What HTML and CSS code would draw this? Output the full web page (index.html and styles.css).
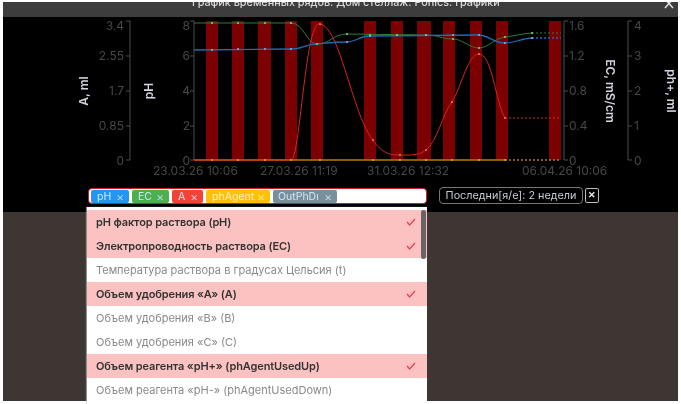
FILE: index.html
```html
<!DOCTYPE html>
<html lang="en">
<head>
    <meta charset="UTF-8">
    <title>Ponics charts</title>
    <link rel="stylesheet" href="styles.css">
</head>
<body>

<div class="window">
    <div class="titlebar">
        <span class="title">График временных рядов. Дом стеллаж: Ponics. графики</span>
        <svg class="close" width="12" height="8" viewBox="0 0 12 8"><path d="M1 -3 L9 6 M9 -3 L1 6"/></svg>
    </div>

    <div class="panel">
        <svg class="chart" width="675" height="171" viewBox="3 17 675 171">
            <g class="bars">
                <rect x="206" y="21" width="12" height="139"/>
                <rect x="232" y="21" width="12" height="139"/>
                <rect x="258" y="21" width="13" height="139"/>
                <rect x="285" y="21" width="12" height="139"/>
                <rect x="311" y="21" width="12" height="139"/>
                <rect x="364" y="21" width="12" height="139"/>
                <rect x="391" y="21" width="12" height="139"/>
                <rect x="417" y="21" width="14" height="139"/>
                <rect x="443" y="21" width="12" height="139"/>
                <rect x="470" y="21" width="12" height="139"/>
                <rect x="496" y="21" width="12" height="139"/>
                <rect x="549" y="21" width="12" height="139"/>
            </g>

            <!-- axes -->
            <g class="axis">
                <path d="M126 21 H130 V160 H126 M126 56 H130 M126 91 H130 M126 126 H130"/>
                <path d="M190 21 H194 V160 H190 M190 56 H194 M190 91 H194 M190 126 H194"/>
                <path d="M568 21 H564 V160 H568 M564 56 H568 M564 91 H568 M564 126 H568"/>
                <path d="M632 21 H628 V160 H632 M628 56 H632 M628 91 H632 M628 126 H632"/>
            </g>
            <g class="ticks end">
                <text x="124" y="30">3.4</text>
                <text x="124" y="60">2.55</text>
                <text x="124" y="95">1.7</text>
                <text x="124" y="130">0.85</text>
                <text x="124" y="165">0</text>
                <text x="190" y="30">8</text>
                <text x="190" y="60">6</text>
                <text x="190" y="95">4</text>
                <text x="190" y="130">2</text>
                <text x="190" y="165">0</text>
            </g>
            <g class="ticks">
                <text x="569" y="30">1.6</text>
                <text x="569" y="60">1.2</text>
                <text x="569" y="95">0.8</text>
                <text x="569" y="130">0.4</text>
                <text x="569" y="165">0</text>
                <text x="634" y="30">4</text>
                <text x="634" y="60">3</text>
                <text x="634" y="95">2</text>
                <text x="634" y="130">1</text>
                <text x="634" y="165">0</text>
                <text x="153" y="175">23.03.26 10:06</text>
                <text x="260" y="175">27.03.26 11:19</text>
                <text x="367" y="175">31.03.26 12:32</text>
                <text x="522" y="175">06.04.26 10:06</text>
            </g>
            <text class="axis-name" transform="translate(88 91) rotate(-90)">A, ml</text>
            <text class="axis-name" transform="translate(153 91) rotate(-90)">pH</text>
            <text class="axis-name" transform="translate(606 91) rotate(90)">EC, mS/cm</text>
            <text class="axis-name" transform="translate(667 91) rotate(90)">ph+, ml</text>

            <!-- series -->
            <path class="line yellow" d="M194 160 H505"/>
            <path class="line yellow dotted" d="M505 160 H561"/>
            <path class="line green" d="M194 23 L291 23 C304 23 306 44 317.5 44 C330 44 333 34 347 34 L426 35 C440 35 440 39 453 39 C462 39 470 48 479 48 C488 48 495 38 505 37 C515 36 522 33.5 532 33"/>
            <path class="line green dotted" d="M532 33 H561"/>
            <path class="line blue" d="M194 50 L291 49 C304 49 304 44 317.5 44 C328 43 335 42 347 42 C355 42 360 36 370 36 L478 35 C490 35 492 43 505 43 C515 43 522 38 532 38"/>
            <path class="line blue dotted" d="M532 38 H561"/>
            <path class="line red" d="M194 160 L291 160 C300 160 305 24 319 24 C335 24 345 75 360 115 C368 135 378 155 397 155 C410 155 418 156 426 150 C438 140 442 115 452 102 C462 85 468 54 479 54 C492 54 495 100 505 118"/>
            <path class="line red dotted" d="M505 118 H561"/>

            <g class="dots">
                <path class="dot-green" d="M212 23h.01 M238 23h.01 M265 23h.01 M291 23h.01 M317 44h.01 M347 34h.01 M370 35h.01 M397 35h.01 M426 35h.01 M453 39h.01 M479 48h.01 M505 37h.01 M532 33h.01"/>
                <path class="dot-blue" d="M212 50h.01 M238 49h.01 M265 49h.01 M291 49h.01 M347 42h.01 M370 36h.01 M397 35h.01 M426 35h.01 M453 35h.01 M479 35h.01 M505 43h.01 M532 38h.01"/>
                <path class="dot-red" d="M320 24h.01 M373 140h.01 M400 155h.01 M426 150h.01 M452 102h.01 M479 54h.01 M505 118h.01"/>
                <path class="dot-yellow" d="M212 160h.01 M238 160h.01 M265 160h.01 M291 160h.01 M320 160h.01 M373 160h.01 M400 160h.01 M426 160h.01 M452 160h.01 M479 160h.01 M505 160h.01"/>
            </g>
        </svg>

        <div class="controls">
            <div class="chip-input">
                <span class="chip chip-blue">pH <i>×</i></span>
                <span class="chip chip-green">EC <i>×</i></span>
                <span class="chip chip-red">A <i>×</i></span>
                <span class="chip chip-amber">phAgent <i>×</i></span>
                <span class="chip chip-grey">OutPhDı <i>×</i></span>
            </div>
            <div class="period">Последни[я/е]: 2 недели</div>
            <button class="period-clear">✕</button>
        </div>
    </div>

    <div class="backdrop"></div>

    <div class="menu">
        <div class="thumb"></div>
        <div class="row on">pH фактор раствора (pH)<svg class="check" width="10" height="8" viewBox="0 0 10 8"><path d="M1 4 L3.6 7 L9 1"/></svg></div>
        <div class="row on">Электропроводность раствора (EC)<svg class="check" width="10" height="8" viewBox="0 0 10 8"><path d="M1 4 L3.6 7 L9 1"/></svg></div>
        <div class="row">Температура раствора в градусах Цельсия (t)</div>
        <div class="row on">Объем удобрения «A» (A)<svg class="check" width="10" height="8" viewBox="0 0 10 8"><path d="M1 4 L3.6 7 L9 1"/></svg></div>
        <div class="row">Объем удобрения «B» (B)</div>
        <div class="row">Объем удобрения «C» (C)</div>
        <div class="row on">Объем реагента «pH+» (phAgentUsedUp)<svg class="check" width="10" height="8" viewBox="0 0 10 8"><path d="M1 4 L3.6 7 L9 1"/></svg></div>
        <div class="row">Объем реагента «pH-» (phAgentUsedDown)</div>
    </div>
</div>

</body>
</html>
```

FILE: styles.css
```css
html, body {
  margin: 0;
  height: 404px;
  overflow: hidden;
  background: #fff;
  font-family: Inter, "Noto Sans", sans-serif;
}
.window {
  position: relative;
  display: flex;
  flex-direction: column;
  margin: 2px 3px 0 3px;
  height: 399px;
  filter: blur(0.55px);
}
.titlebar {
  display: flex;
  height: 15px;
  overflow: hidden;
  background: #3d3d3d;
  flex: none;
}
.title {
  margin: -7px 0 0 189px;
  font-size: 10.8px;
  line-height: 16px;
  font-weight: 500;
  color: #d8d8d8;
  white-space: nowrap;
}
.close {
  margin: 0 2px 0 auto;
}
.close path {
  stroke: #ddd;
  stroke-width: 1.6;
  fill: none;
}
.panel {
  background: #000;
  height: 195px;
  flex: none;
}
.chart {
  display: block;
}
.bars rect {
  fill: #7d0000;
}
.axis path {
  fill: none;
  stroke: #4d4d4d;
  stroke-width: 1;
}
.ticks text {
  font-size: 12px;
  fill: #474747;
}
.ticks.end text {
  text-anchor: end;
}
.axis-name {
  font-size: 12px;
  font-weight: 600;
  fill: #d6d2e0;
  text-anchor: middle;
}
.line {
  fill: none;
  stroke-width: 1;
}
.line.dotted {
  stroke-dasharray: 2 2;
}
.yellow { stroke: #b47e08; stroke-width: 1.3; }
.green { stroke: #2f7d33; }
.blue { stroke: #1a6cb4; stroke-width: 1.3; }
.red { stroke: #d8241c; }
.dots path {
  fill: none;
  stroke-width: 2;
  stroke-linecap: round;
}
.dot-green { stroke: #8fc98a; }
.dot-blue { stroke: #86aede; }
.dot-red { stroke: #ee7464; }
.dot-yellow { stroke: #e8a020; }

.controls {
  display: flex;
  align-items: flex-start;
  padding-left: 85px;
}
.chip-input {
  display: flex;
  gap: 3px;
  align-items: center;
  box-sizing: border-box;
  width: 339px;
  height: 16px;
  padding: 0 2px;
  background: #fff;
  border: 1px solid #c8202a;
  border-radius: 4px;
}
.chip {
  box-sizing: border-box;
  display: flex;
  align-items: center;
  justify-content: space-between;
  height: 13px;
  padding: 0 5px 0 6px;
  border-radius: 2px;
  font-size: 10.5px;
  color: #cfe6f6;
  white-space: nowrap;
  overflow: hidden;
}
.chip i {
  font-style: normal;
  font-size: 12px;
  font-weight: 300;
}
.chip-blue { width: 38px; background: #2196f3; }
.chip-green { width: 37px; background: #4caf50; }
.chip-red { width: 31px; background: #f44336; }
.chip-amber { width: 64px; background: #ffc107; color: #fff0c0; }
.chip-grey { width: 64px; background: #78909c; padding: 0 5px 0 5px; }

.period {
  box-sizing: border-box;
  width: 144px;
  height: 17px;
  margin: -1px 0 0 12px;
  border: 1px solid #777;
  border-radius: 4px;
  font-size: 10.8px;
  line-height: 15px;
  text-align: center;
  color: #c4ccd0;
  white-space: nowrap;
}
.period-clear {
  box-sizing: border-box;
  width: 14px;
  height: 15px;
  margin-left: 2px;
  padding: 0;
  background: #000;
  border: 1px solid #bbb;
  border-radius: 2px;
  color: #eee;
  font-size: 9px;
  font-weight: 700;
  line-height: 13px;
}
.backdrop {
  flex: 1;
  background: #3e3633;
}
.menu {
  position: absolute;
  left: 84px;
  top: 205px;
  width: 340px;
  height: 197px;
  padding-top: 3px;
  box-sizing: border-box;
  overflow: hidden;
  background: #fff;
  box-shadow: -1px 0 1px rgba(200, 200, 200, 0.6);
  font-size: 11px;
}
.thumb {
  position: absolute;
  right: 1px;
  top: 3px;
  width: 5px;
  height: 49px;
  border-radius: 3px;
  background: #6a6363;
}
.row {
  display: flex;
  align-items: center;
  justify-content: space-between;
  height: 24px;
  padding: 0 11px 0 9px;
  color: #8a8a8a;
  white-space: nowrap;
}
.row.on {
  background: #fcc2c2;
  color: #333;
  font-weight: 600;
  letter-spacing: -0.12px;
}
.check path {
  fill: none;
  stroke: #e8414a;
  stroke-width: 1.2;
}
```
